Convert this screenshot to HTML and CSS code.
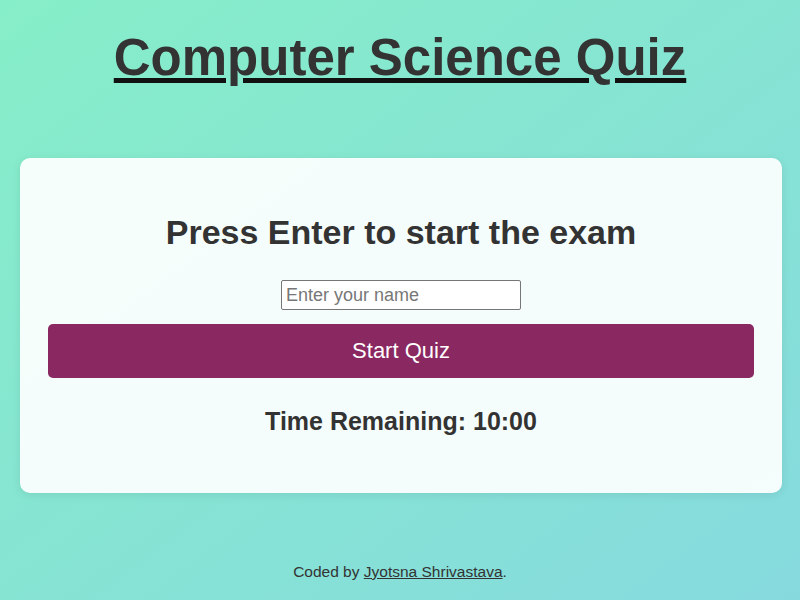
FILE: index.html
```html
<!DOCTYPE html>
<html lang="en">
<head>
    <meta charset="UTF-8">
    <meta name="viewport" content="width=device-width, initial-scale=1.0">
    <title>Computer Science Quiz</title>
    <link rel="stylesheet" href="styles.css">
</head>
<body>
    <h1 class="title"><a href="#">Computer Science Quiz</a></h1>

    <div class="quiz-card">
        <h2 class="prompt">Press Enter to start the exam</h2>
        <input type="text" class="name-input" placeholder="Enter your name">
        <button class="start-btn">Start Quiz</button>
        <div class="timer">Time Remaining: <span>10:00</span></div>
    </div>

    <footer class="footer">
        Coded by <a href="#">Jyotsna Shrivastava</a>.
    </footer>
</body>
</html>
```

FILE: styles.css
```css
html {
    height: 100%;
}

body {
    margin: 0;
    min-height: 100%;
    display: flex;
    flex-direction: column;
    align-items: center;
    font-family: "Liberation Sans", Arial, sans-serif;
    color: #333;
    background: linear-gradient(to bottom right, #86eec8, #86dade);
}

.title {
    margin: 30px 0 0;
    font-size: 51px;
    line-height: 55px;
}

.title a {
    color: #333;
    text-decoration-color: #111;
}

.quiz-card {
    box-sizing: border-box;
    width: 762px;
    margin: 73px 18px 0 20px;
    padding: 28px 28px 58px;
    background: rgba(255, 255, 255, 0.92);
    border-radius: 10px;
    box-shadow: 0 2px 10px rgba(0, 0, 0, 0.08);
    display: flex;
    flex-direction: column;
    align-items: center;
}

.prompt {
    margin: 28px 0 29px;
    font-size: 34px;
    line-height: 37px;
}

.name-input {
    box-sizing: border-box;
    width: 240px;
    height: 30px;
    padding: 2px 4px;
    font-family: "Liberation Sans", Arial, sans-serif;
    font-size: 18px;
    border: 1px solid #767676;
    border-radius: 2px;
    background: #fff;
}

.name-input::placeholder {
    color: #777;
}

.start-btn {
    width: 100%;
    height: 54px;
    margin-top: 14px;
    border: none;
    border-radius: 5px;
    background: #8a2861;
    color: #fff;
    font-family: "Liberation Sans", Arial, sans-serif;
    font-size: 22px;
    cursor: pointer;
}

.timer {
    margin-top: 29px;
    font-size: 25px;
    line-height: 28px;
    font-weight: bold;
}

.footer {
    margin-top: auto;
    padding-bottom: 19px;
    font-size: 15.5px;
}

.footer a {
    color: #333;
}
```
